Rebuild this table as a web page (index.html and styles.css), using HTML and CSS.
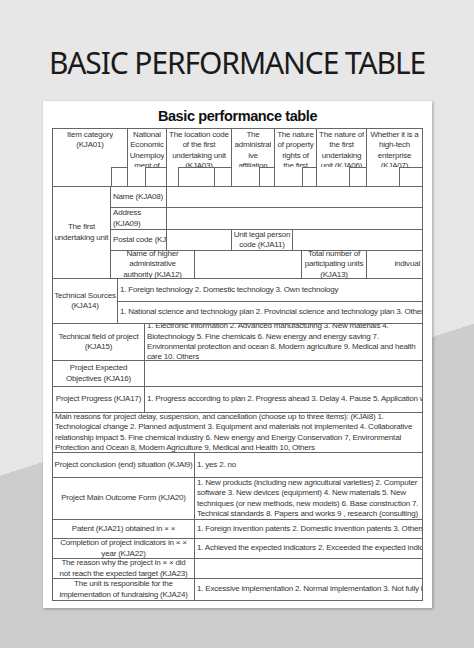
FILE: index.html
```html
<!DOCTYPE html>
<html>
<head>
<meta charset="utf-8">
<link rel="stylesheet" href="styles.css">
</head>
<body>
<div class="page">
  <div class="title">BASIC PERFORMANCE TABLE</div>
  <div class="paper">
    <div class="subtitle">Basic performance table</div>
    <div class="grid">
      <div class="c hd h1"><div class="clip">Item category<br>(KJA01)</div></div>
      <div class="c hd h2"><div class="clip">National<br>Economic<br>Unemploy<br>ment of<br>China</div></div>
      <div class="c hd h3"><div class="clip">The location code<br>of the first<br>undertaking unit<br>(KJA03)</div></div>
      <div class="c hd h4"><div class="clip">The<br>administrat<br>ive<br>affiliation</div></div>
      <div class="c hd h5"><div class="clip">The nature<br>of property<br>rights of<br>the first</div></div>
      <div class="c hd h6"><div class="clip">The nature of<br>the first<br>undertaking<br>unit (KJA06)</div></div>
      <div class="c hd h7"><div class="clip">Whether it is a<br>high-tech<br>enterprise<br>(KJA07)</div></div>
      <div class="sub s1"></div>
      <div class="sub s2"></div>
      <div class="sub s3"></div>
      <div class="sub s4"></div>
      <div class="sub s5"></div>
      <div class="sub s6"></div>
      <div class="sub s7"></div>
      <div class="sub s8"></div>

      <div class="c lbl b-first"><span>The first<br>undertaking unit</span></div>
      <div class="c txt b-name"><span>Name (KJA08)</span></div>
      <div class="c b-name-v"></div>
      <div class="c txt b-addr"><span>Address<br>(KJA09)</span></div>
      <div class="c b-addr-v"></div>
      <div class="c txt b-post"><span>Postal code (KJA10)</span></div>
      <div class="c b-post-v"></div>
      <div class="c lbl b-legal"><span>Unit legal person<br>code (KJA11)</span></div>
      <div class="c b-legal-v"></div>
      <div class="c lbl b-higher"><span>Name of higher<br>administrative<br>authority (KJA12)</span></div>
      <div class="c b-higher-v"></div>
      <div class="c lbl b-total"><span>Total number of<br>participating units<br>(KJA13)</span></div>
      <div class="c rgt b-indiv"><span>indivual</span></div>

      <div class="c lbl b-src"><span>Technical Sources<br>(KJA14)</span></div>
      <div class="c txt b-src1"><span>1. Foreign technology 2. Domestic technology 3. Own technology</span></div>
      <div class="c txt b-src2"><span>1. National science and technology plan 2. Provincial science and technology plan 3. Others</span></div>

      <div class="c lbl b-field"><span>Technical field of project<br>(KJA15)</span></div>
      <div class="c txt b-field-v"><span>1. Electronic information 2. Advanced manufacturing 3. New materials 4.<br>Biotechnology 5. Fine chemicals 6. New energy and energy saving 7.<br>Environmental protection and ocean 8. Modern agriculture 9. Medical and health<br>care 10. Others</span></div>

      <div class="c lbl b-obj"><span>Project Expected<br>Objectives (KJA16)</span></div>
      <div class="c b-obj-v"></div>

      <div class="c lbl b-prog"><span>Project Progress (KJA17)</span></div>
      <div class="c txt b-prog-v"><span>1. Progress according to plan 2. Progress ahead 3. Delay 4. Pause 5. Application withdrawn</span></div>

      <div class="c txt b-reason"><span>Main reasons for project delay, suspension, and cancellation (choose up to three items): (KJAl8) 1.<br>Technological change 2. Planned adjustment 3. Equipment and materials not implemented 4. Collaborative<br>relationship impact 5. Fine chemical industry 6. New energy and Energy Conservation 7, Environmental<br>Protection and Ocean 8, Modern Agriculture 9, Medical and Health 10, Others</span></div>

      <div class="c lbl b-conc"><span>Project conclusion (end) situation (KJAl9)</span></div>
      <div class="c txt b-conc-v"><span>1. yes 2. no</span></div>

      <div class="c lbl b-out"><span>Project Main Outcome Form (KJA20)</span></div>
      <div class="c txt b-out-v"><span>1. New products (including new agricultural varieties) 2. Computer<br>software 3. New devices (equipment) 4. New materials 5. New<br>techniques (or new methods, new models) 6. Base construction 7.<br>Technical standards 8. Papers and works 9 , research (consulting)</span></div>

      <div class="c lbl b-pat"><span>Patent (KJA21) obtained in × ×</span></div>
      <div class="c txt b-pat-v"><span>1. Foreign invention patents 2. Domestic invention patents 3. Others</span></div>

      <div class="c lbl b-comp"><span>Completion of project indicators in × ×<br>year (KJA22)</span></div>
      <div class="c txt b-comp-v"><span>1. Achieved the expected indicators 2. Exceeded the expected indicators</span></div>

      <div class="c lbl b-why"><span>The reason why the project in × × did<br>not reach the expected target (KJA23)</span></div>
      <div class="c b-why-v"></div>

      <div class="c lbl b-fund"><span>The unit is responsible for the<br>implementation of fundraising (KJA24)</span></div>
      <div class="c txt b-fund-v"><span>1. Excessive implementation 2. Normal implementation 3. Not fully implemented</span></div>
    </div>
  </div>
</div>
</body>
</html>
```

FILE: styles.css
```css
html, body {
  margin: 0;
  padding: 0;
}

.page {
  width: 474px;
  height: 648px;
  overflow: hidden;
  background: linear-gradient(162.2deg, #e7e7e7 453px, #cdcdcd 453px);
}

.title {
  box-sizing: border-box;
  height: 101px;
  padding-top: 43px;
  font-family: "Noto Sans", sans-serif;
  font-size: 30px;
  line-height: 40px;
  letter-spacing: -1.1px;
  color: #1a1a1a;
  text-align: center;
}

.paper {
  box-sizing: border-box;
  margin-left: 43px;
  width: 389px;
  height: 507px;
  padding: 0 9px;
  background: #ffffff;
  box-shadow: 1px 1px 3px rgba(0, 0, 0, 0.3);
}

.subtitle {
  box-sizing: border-box;
  height: 27px;
  padding-top: 3px;
  font-family: "Liberation Sans", Arial, sans-serif;
  font-weight: bold;
  font-size: 14.5px;
  line-height: 24px;
  letter-spacing: -0.4px;
  color: #111111;
  text-align: center;
}

.grid {
  display: grid;
  grid-template-columns: 58px 7px 10px 17px 22px 11px 17px 19px 18px 27px 16px 18px 9px 15px 32px 18px 32px 24px;
  grid-template-rows: 38px 20px 21px 22px 21px 28px 23px 22px 37px 26px 26px 40px 25px 42px 19px 20px 20px 22px;
  border-top: 1px solid #666666;
  border-left: 1px solid #666666;
  font-family: "Liberation Sans", Arial, sans-serif;
  font-size: 8px;
  letter-spacing: -0.2px;
  line-height: 10.4px;
  color: #363636;
}

.c {
  border-right: 1px solid #666666;
  border-bottom: 1px solid #666666;
  overflow: hidden;
  display: flex;
  align-items: center;
  white-space: nowrap;
  min-width: 0;
  min-height: 0;
}

.lbl {
  justify-content: center;
  text-align: center;
}

.txt {
  justify-content: flex-start;
  padding-left: 2px;
}

.rgt {
  justify-content: flex-end;
  padding-right: 2px;
}

.hd {
  align-items: flex-start;
  justify-content: center;
  text-align: center;
}

.clip {
  height: 38px;
  padding-top: 1px;
  box-sizing: border-box;
  overflow: hidden;
}

.sub {
  border-top: 1px solid #666666;
  border-left: 1px solid #666666;
}

/* header */
.h1 { grid-area: 1 / 1 / 3 / 4; }
.h2 { grid-area: 1 / 4 / 3 / 6; }
.h3 { grid-area: 1 / 6 / 3 / 10; }
.h4 { grid-area: 1 / 10 / 3 / 12; }
.h5 { grid-area: 1 / 12 / 3 / 15; }
.h6 { grid-area: 1 / 15 / 3 / 17; }
.h7 { grid-area: 1 / 17 / 3 / 19; }

.s1 { grid-area: 2 / 2 / 3 / 4; }
.s2 { grid-area: 2 / 5 / 3 / 6; }
.s3 { grid-area: 2 / 7 / 3 / 9; }
.s4 { grid-area: 2 / 9 / 3 / 10; }
.s5 { grid-area: 2 / 11 / 3 / 12; }
.s6 { grid-area: 2 / 14 / 3 / 15; }
.s7 { grid-area: 2 / 16 / 3 / 17; }
.s8 { grid-area: 2 / 18 / 3 / 19; }

/* first undertaking unit block */
.b-first { grid-area: 3 / 1 / 7 / 2; }
.b-name { grid-area: 3 / 2 / 4 / 6; }
.b-name-v { grid-area: 3 / 6 / 4 / 19; }
.b-addr { grid-area: 4 / 2 / 5 / 6; }
.b-addr-v { grid-area: 4 / 6 / 5 / 19; }
.b-post { grid-area: 5 / 2 / 6 / 6; }
.b-post-v { grid-area: 5 / 6 / 6 / 10; }
.b-legal { grid-area: 5 / 10 / 6 / 13; }
.b-legal-v { grid-area: 5 / 13 / 6 / 19; }
.b-higher { grid-area: 6 / 2 / 7 / 8; }
.b-higher-v { grid-area: 6 / 8 / 7 / 14; }
.b-total { grid-area: 6 / 14 / 7 / 17; }
.b-indiv { grid-area: 6 / 17 / 7 / 19; }

.b-src { grid-area: 7 / 1 / 9 / 3; }
.b-src1 { grid-area: 7 / 3 / 8 / 19; }
.b-src2 { grid-area: 8 / 3 / 9 / 19; }

.b-field { grid-area: 9 / 1 / 10 / 5; }
.b-field-v { grid-area: 9 / 5 / 10 / 19; }

.b-obj { grid-area: 10 / 1 / 11 / 5; }
.b-obj-v { grid-area: 10 / 5 / 11 / 19; }

.b-prog { grid-area: 11 / 1 / 12 / 5; }
.b-prog-v { grid-area: 11 / 5 / 12 / 19; }

.b-reason { grid-area: 12 / 1 / 13 / 19; }

.b-conc { grid-area: 13 / 1 / 14 / 8; }
.b-conc-v { grid-area: 13 / 8 / 14 / 19; }
.b-out { grid-area: 14 / 1 / 15 / 8; }
.b-out-v { grid-area: 14 / 8 / 15 / 19; }
.b-pat { grid-area: 15 / 1 / 16 / 8; }
.b-pat-v { grid-area: 15 / 8 / 16 / 19; }
.b-comp { grid-area: 16 / 1 / 17 / 8; }
.b-comp-v { grid-area: 16 / 8 / 17 / 19; }
.b-why { grid-area: 17 / 1 / 18 / 8; }
.b-why-v { grid-area: 17 / 8 / 18 / 19; }
.b-fund { grid-area: 18 / 1 / 19 / 8; }
.b-fund-v { grid-area: 18 / 8 / 19 / 19; }
```
